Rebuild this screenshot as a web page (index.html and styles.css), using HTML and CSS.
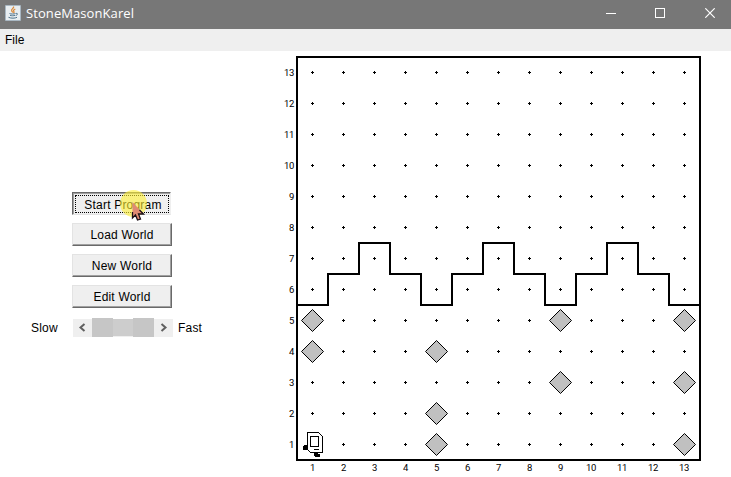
FILE: index.html
```html
<!DOCTYPE html>
<html lang="en">
<head>
<meta charset="utf-8">
<title>StoneMasonKarel</title>
<link rel="stylesheet" href="styles.css">
</head>
<body>
<header class="titlebar">
  <svg class="app-icon" width="16" height="16" viewBox="0 0 16 16">
    <rect width="16" height="16" rx="1" fill="#a9b7c2"/>
    <rect x="1" y="1" width="14" height="14" fill="#e9eef1"/>
    <path d="M8.5 1.5c1 1.7-2.8 2.6-1.8 4.4.3.6 1 1 .9 1.8M10.3 4c-1.6.8-2.2 1.4-1.4 2.5.4.6.2 1-.4 1.5" fill="none" stroke="#d98a3d" stroke-width="1.3"/>
    <path d="M4.5 8.5c1 .7 4.800.7 6 0M5 10.300c1.500.6 3.700.6 5 0M11 8.500c2-.7 1.900 1.500-.3 2M3.500 12.300c2.500 1.200 6.700 1.100 8.500 0" fill="none" stroke="#4f738b"/>
  </svg>
  <h1 class="title">StoneMasonKarel</h1>
  <div class="window-controls">
    <svg width="10" height="10" viewBox="0 0 10 10"><path d="M0 5.500H10"/></svg>
    <svg width="10" height="10" viewBox="0 0 10 10"><path d="M.5.5h9v9h-9z"/></svg>
    <svg class="close" width="10" height="10" viewBox="0 0 10 10"><path d="M.3.300l9.400 9.400M9.700.300L.3 9.700"/></svg>
  </div>
</header>
<nav class="menubar"><span>File</span></nav>
<main class="content">
  <section class="controls">
    <button class="btn pressed"><span>Start Program</span>
      <svg class="pointer" width="30" height="31" viewBox="0 0 30 31">
        <circle cx="14.500" cy="13.500" r="13.500" fill="#fff032" fill-opacity=".6"/>
        <path d="M13.500 12v16l3-3 2 5 3-1-2-5h5z" fill="#e08a72"/>
        <path d="M13.500 22v6l3-3 2 5 3-1-2-5h5l-4-4" fill="none" stroke="#1c1018" stroke-width="1.300"/>
      </svg>
    </button>
    <button class="btn">Load World</button>
    <button class="btn">New World</button>
    <button class="btn">Edit World</button>
    <div class="speed">
      <span class="slow">Slow</span>
      <div class="scrollbar">
        <svg width="19" height="18" viewBox="0 0 19 18"><path d="M11.500 5L7.500 8.500l4 3.500"/></svg>
        <div class="track"><i></i><i class="thumb"></i><i></i></div>
        <svg width="19" height="18" viewBox="0 0 19 18"><path d="M7.500 5L11.500 8.500l-4 3.500"/></svg>
      </div>
      <span>Fast</span>
    </div>
  </section>
  <svg class="world" width="451" height="426" viewBox="280 51 451 426">
    <defs>
      <pattern id="dots" x="297" y="57" width="31" height="31" patternUnits="userSpaceOnUse">
        <path d="M14 15h3v1h-3zM15 14h1v3h-1z"/>
      </pattern>
      <path id="beeper" d="M0-11L11 0L0 11L-11 0z"/>
    </defs>
    <rect x="297" y="57" width="403" height="403" fill="url(#dots)"/>
    <path class="wall" d="M297 57H700V460H297z"/>
    <path class="wall" d="M297 305H328V274H359V243H390V274H421V305H452V274H483V243H514V274H545V305H576V274H607V243H638V274H669V305H700"/>
    <g class="beepers">
      <use href="#beeper" x="312.5" y="320.5"/><use href="#beeper" x="312.5" y="351.5"/>
      <use href="#beeper" x="436.5" y="351.5"/><use href="#beeper" x="436.5" y="413.5"/><use href="#beeper" x="436.5" y="444.5"/>
      <use href="#beeper" x="560.5" y="320.5"/><use href="#beeper" x="560.5" y="382.5"/>
      <use href="#beeper" x="684.5" y="320.5"/><use href="#beeper" x="684.5" y="382.5"/><use href="#beeper" x="684.5" y="444.5"/>
    </g>
    <g class="robot">
      <path d="M307.500 432.500H318.500L322.500 436.500V452.500H310.500L307.500 449.500z"/>
      <path d="M310.500 436.500H318.500V446.500H310.500zM314 449.500H319"/>
      <path class="foot" d="M303 446h1v-1h3v5h-4zM314 453h4v1h2v3h-5v-1h-1z"/>
    </g>
    <g class="rows">
      <text x="294" y="76">13</text><text x="294" y="107">12</text><text x="294" y="138">11</text><text x="294" y="169">10</text><text x="294" y="200">9</text><text x="294" y="231">8</text><text x="294" y="262">7</text><text x="294" y="293">6</text><text x="294" y="324">5</text><text x="294" y="355">4</text><text x="294" y="386">3</text><text x="294" y="417">2</text><text x="294" y="448">1</text>
    </g>
    <g class="cols">
      <text x="312.5" y="471">1</text><text x="343.5" y="471">2</text><text x="374.5" y="471">3</text><text x="405.5" y="471">4</text><text x="436.5" y="471">5</text><text x="467.5" y="471">6</text><text x="498.5" y="471">7</text><text x="529.5" y="471">8</text><text x="560.5" y="471">9</text><text x="591" y="471">10</text><text x="622" y="471">11</text><text x="653" y="471">12</text><text x="684" y="471">13</text>
    </g>
  </svg>
</main>
</body>
</html>
```
FILE: styles.css
```css
* { box-sizing: border-box; }
body {
  margin: 0;
  width: 731px;
  height: 477px;
  overflow: hidden;
  background: #fff;
  color: #000;
  font: 12px/15px "Liberation Sans", Arial, sans-serif;
}
.titlebar {
  display: flex;
  align-items: center;
  height: 29px;
  padding: 0 16px 4px 5px;
  background: #777;
  color: #fff;
}
.title {
  margin: 1px 0 0 5px;
  font: 13px/20px "Open Sans", "Noto Sans", sans-serif;
  letter-spacing: .08px;
}
.window-controls {
  display: flex;
  gap: 39px;
  margin-left: auto;
}
.window-controls path { fill: none; stroke: #fff; shape-rendering: crispEdges; }
.window-controls .close { margin-left: 1px; }
.window-controls .close path { shape-rendering: auto; stroke-width: 1.2; }
.menubar {
  height: 22px;
  padding: 4px 5px;
  background: #efefef;
}
.content {
  display: flex;
  height: 426px;
}
.controls {
  width: 280px;
  padding-top: 141px;
}
.btn {
  display: block;
  width: 100px;
  height: 23px;
  margin: 0 0 8px 72px;
  padding: 2px 0 0;
  border: 1px solid;
  border-color: #e3e3e3 #696969 #696969 #e3e3e3;
  background: #efefef;
  box-shadow: inset -1px -1px #a0a0a0;
  color: #000;
  font: inherit;
  letter-spacing: .2px;
}
.btn.pressed {
  width: 99px;
  border-color: #696969 #efefef #e3e3e3 #696969;
  box-shadow: inset 1px 1px #a0a0a0;
  padding: 1px 0 0 2px;
  position: relative;
}
.pressed span {
  display: block;
  width: 94px;
  height: 18px;
  border: 1px dotted #000;
  padding: 2px 0 0 2px;
  line-height: 14px;
}
.pointer {
  position: absolute;
  left: 46px;
  top: -3px;
}
.speed {
  display: flex;
  align-items: center;
  height: 18px;
  margin-top: 11px;
  padding-left: 31px;
  letter-spacing: .2px;
}
.slow { width: 42px; }
.scrollbar {
  display: flex;
  width: 100px;
  height: 18px;
  margin-right: 5px;
  background: #efefef;
}
.scrollbar path { fill: none; stroke: #606060; stroke-width: 2; }
.track {
  display: flex;
  width: 62px;
  height: 19px;
  margin-top: -1px;
}
.track i { width: 21px; background: #c6c6c6; }
.track .thumb { width: 20px; height: 17px; margin-top: 1px; background: #cdcdcd; }
.world { display: block; font: 9.5px Roboto, Arial, sans-serif; letter-spacing: -.4px; }
.wall { fill: none; stroke: #000; stroke-width: 2; shape-rendering: crispEdges; }
.beepers { fill: #c0c0c0; stroke: #000; }
.robot { fill: #fff; stroke: #000; shape-rendering: crispEdges; }
.foot { fill: #000; stroke: none; }
.rows { text-anchor: end; }
.cols { text-anchor: middle; }
```
